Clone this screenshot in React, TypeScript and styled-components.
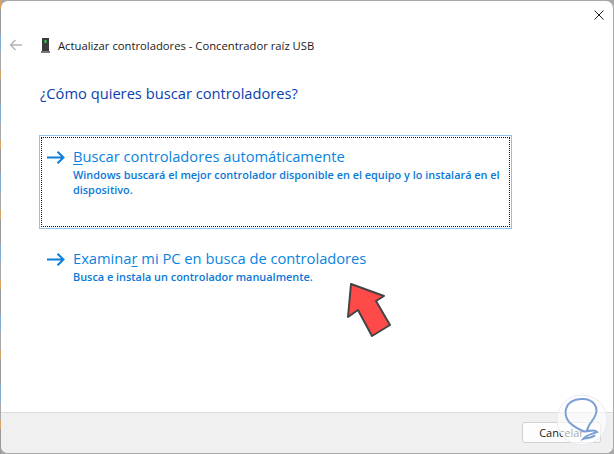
import React from 'react';
import styled, { createGlobalStyle } from 'styled-components';

const GlobalStyle = createGlobalStyle`
	html,
	body {
		margin: 0;
		padding: 0;
		width: 614px;
		height: 454px;
		overflow: hidden;
		background: #a9a9a9;
	}
`;

const Desktop = styled.div`
	width: 614px;
	height: 454px;
	padding: 1px;
	box-sizing: border-box;
	background: repeating-linear-gradient(
				to bottom,
				#d9a468 0 9px,
				#9a9a9a 9px 34px,
				#86acd0 34px 52px,
				#a8a8a8 52px 70px
			)
			0 0 / 1px 100% no-repeat,
		#a8a8a8;
	font-family: 'Open Sans', 'Noto Sans', sans-serif;
`;

const Window = styled.div`
	position: relative;
	height: 100%;
	display: flex;
	flex-direction: column;
	background: #fff;
	border-radius: 7px;
	overflow: hidden;
`;

const TitleBar = styled.div`
	height: 29px;
	flex: none;
	box-sizing: border-box;
	display: flex;
	justify-content: flex-end;
	align-items: flex-start;
	padding: 9px 9px 0 0;
`;

const Header = styled.div`
	display: flex;
	align-items: center;
	height: 30px;
	padding-left: 8px;
`;

const BackIcon = styled.svg`
	width: 13px;
	height: 12px;
	margin-right: 19px;
`;

const DeviceIcon = styled.svg`
	width: 9px;
	height: 15px;
	margin-right: 8px;
`;

const HeaderTitle = styled.span`
	font-size: 11.25px;
	color: #1a1a1a;
	white-space: nowrap;
`;

const Content = styled.div`
	flex: 1;
	display: flex;
	flex-direction: column;
	padding-left: 38px;
`;

const Question = styled.h1`
	margin: 22px 0 0 1px;
	height: 22px;
	font-size: 14.7px;
	line-height: 22px;
	font-weight: 400;
	color: #0a3fb0;
	white-space: nowrap;
`;

const Option = styled.div<{ $focused?: boolean }>`
	width: 473px;
	box-sizing: border-box;
	height: ${(p) => (p.$focused ? '94px' : '60px')};
	margin-top: ${(p) => (p.$focused ? '31px' : '8px')};
	border: 1px solid ${(p) => (p.$focused ? '#90c1ea' : 'transparent')};
	padding: 1px;
`;

const OptionInner = styled.div<{ $focused?: boolean }>`
	height: 100%;
	box-sizing: border-box;
	border: 1px dotted ${(p) => (p.$focused ? '#111' : 'transparent')};
	display: flex;
	padding: 7px 0 0 5px;
`;

const ArrowIcon = styled.svg`
	flex: none;
	width: 18px;
	height: 13px;
	margin: 6px 8px 0 0;
`;

const OptionText = styled.div`
	display: flex;
	flex-direction: column;
`;

const OptionTitle = styled.div`
	font-size: 14.7px;
	line-height: 22px;
	color: #0a84e0;
	white-space: nowrap;

	u {
		text-underline-offset: 2px;
		text-decoration-thickness: 1px;
	}
`;

const OptionDetail = styled.div`
	width: 436px;
	font-size: 10.9px;
	line-height: 15px;
	font-weight: 600;
	color: #0a78d8;
`;

const Pointer = styled.svg`
	position: absolute;
	left: 345px;
	top: 281px;
	width: 48px;
	height: 56px;
`;

const Footer = styled.div`
	flex: none;
	height: 41px;
	box-sizing: border-box;
	background: #f0f0f0;
	border-top: 1px solid #dcdcdc;
	display: flex;
	justify-content: flex-end;
	align-items: flex-start;
	padding: 9px 12px 0 0;
`;

const CancelButton = styled.button`
	width: 79px;
	height: 21px;
	padding: 0;
	font-family: inherit;
	font-size: 11px;
	color: #1a1a1a;
	background: #fdfdfd;
	border: 1px solid #d2d2d2;
	border-radius: 3px;
`;

const Watermark = styled.svg`
	position: absolute;
	left: 555px;
	top: 393px;
	width: 52px;
	height: 52px;
`;

function Arrow() {
	return (
		<ArrowIcon viewBox="0 0 18 13">
			<path d="M0 6.5H16.5M10.5.7l6 5.8-6 5.8" fill="none" stroke="#0a7fdc" strokeWidth="2" />
		</ArrowIcon>
	);
}

function App() {
	return (
		<Desktop>
			<GlobalStyle />
			<Window>
				<TitleBar>
					<svg width="10" height="10" viewBox="0 0 10 10">
						<path d="M.5.5l9 9M9.5.5l-9 9" stroke="#1a1a1a" strokeWidth="1" />
					</svg>
				</TitleBar>
				<Header>
					<BackIcon viewBox="0 0 13 12">
						<path d="M13 6H1.5M6.5 1l-5 5 5 5" fill="none" stroke="#b4b4b4" strokeWidth="1.4" />
					</BackIcon>
					<DeviceIcon viewBox="0 0 9 15">
						<rect x="1" y="0" width="7" height="13" fill="#3a3a3a" />
						<rect x="3.5" y="2" width="2" height="3" fill="#22d04a" />
						<rect x="0" y="13" width="9" height="2" fill="#777" />
					</DeviceIcon>
					<HeaderTitle>Actualizar controladores - Concentrador raíz USB</HeaderTitle>
				</Header>
				<Content>
					<Question>¿Cómo quieres buscar controladores?</Question>
					<Option $focused>
						<OptionInner $focused>
							<Arrow />
							<OptionText>
								<OptionTitle>
									<u>B</u>uscar controladores automáticamente
								</OptionTitle>
								<OptionDetail>
									Windows buscará el mejor controlador disponible en el equipo y lo instalará en el
									dispositivo.
								</OptionDetail>
							</OptionText>
						</OptionInner>
					</Option>
					<Option>
						<OptionInner>
							<Arrow />
							<OptionText>
								<OptionTitle>
									Examina<u>r</u> mi PC en busca de controladores
								</OptionTitle>
								<OptionDetail>Busca e instala un controlador manualmente.</OptionDetail>
							</OptionText>
						</OptionInner>
					</Option>
				</Content>
				<Footer>
					<CancelButton>Cancelar</CancelButton>
				</Footer>
				<Pointer viewBox="0 0 48 56">
					<path
						d="M5 2L38 14L30 19L44 43L26 54L12 28L2 35Z"
						fill="#ff4a4a"
						stroke="#444"
						strokeWidth="2"
						strokeLinejoin="round"
					/>
				</Pointer>
				<Watermark viewBox="0 0 52 52">
					<circle cx="26" cy="26" r="25" fill="#fff" fillOpacity="0.6" stroke="#e6e9f2" />
					<path
						d="M13 28C7 20 8 6 25 5C38 4 43 14 39 22C37 27 33 29 31 36C35 38 38 35 41 38C36 40 30 41 27 45C31 44 36 44 39 41M13 28C17 32 22 35 27 37C29 38 31 37 34 37"
						fill="none"
						stroke="#7d9fd3"
						strokeWidth="2"
					/>
				</Watermark>
			</Window>
		</Desktop>
	);
}

export default App;
